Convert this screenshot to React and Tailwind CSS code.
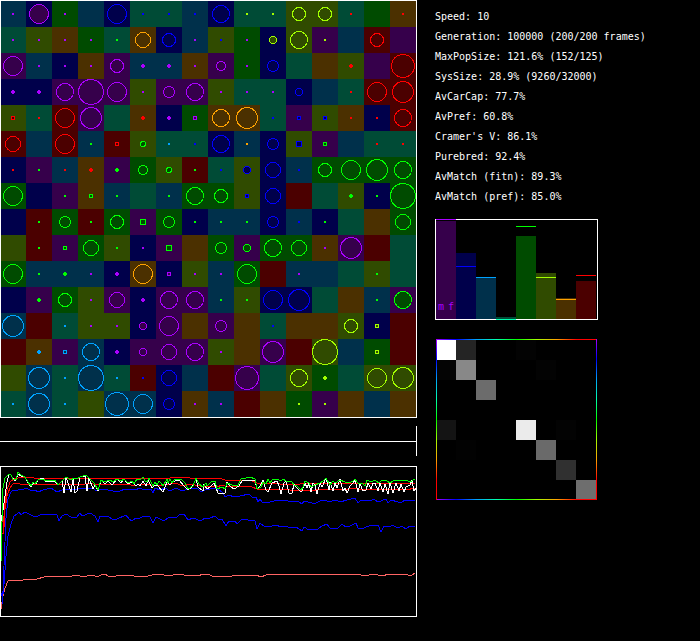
import React from "react";

// dark = habitat, bright = the species adapted to it
const HUES = {
  p: { dark: "#36004b", bright: "#aa00ff" },
  b: { dark: "#00004b", bright: "#0000ff" },
  c: { dark: "#00304b", bright: "#00a2ff" },
  t: { dark: "#004b36", bright: "#00ffb0" },
  g: { dark: "#004b00", bright: "#00ff00" },
  y: { dark: "#304b00", bright: "#a2ff00" },
  o: { dark: "#4b3000", bright: "#ffa200" },
  r: { dark: "#4b0000", bright: "#ff0000" },
};

const CELL = 26;

// habitat, species, size: a radius, "+" for a blob, "s" + half side for a square
const WORLD = [
  "c/p/1 b/p/10 g/p/1 c b/b/10 t/b/1 t/b/1 c/b/1 b/b/9 t/y/1 t/y/1 y/y/7 y/y/7 t/r/1 g o/r/1",
  "t/p/1 y/p/1 o/p/1 g/p/1 t/g/1 o/o/8 b/b/7 c/p/1 y/b/1 g/p/1 b/y/4 y/y/9 p/y/1 c r/r/7 p",
  "p/p/10 c/p/1 b/p/1 o/p/1 p/p/7 c/p/+ c/p/+ o/p/1 p/p/5 g/p/1 b/b/6 t o y/r/+ p r/r/12",
  "b/p/+ b/p/+ p/p/9 p/p/13 p/p/10 y/p/1 p/p/6 p/p/9 y/p/1 t/p/1 t/p/1 b/b/4 c t/r/1 r/r/10 r/r/11",
  "y/r/s2 t/r/1 r/r/10 p/p/11 t o/r/+ b/p/+ g/p/s2 o/o/9 o/o/11 t/b/1 p/b/s2 y/b/s2 o/r/1 b/r/1 r/r/9",
  "r/r/8 c r/r/10 c/g/1 r/r/s2 y/g/3 t/c/1 t/b/1 b/b/9 c/o/1 b/b/6 y/b/s3 p/g/s2 c t/r/1 t/r/1",
  "b/r/1 p/g/1 c/r/1 o/r/+ p/g/+ g/g/5 y/g/3 r/g/1 t/b/1 y/b/4 b/b/8 c/b/1 g/g/7 g/g/10 g/g/11 g/g/9",
  "g/g/10 b p/g/1 o/g/s2 c/g/1 t c/g/1 g/g/9 g/g/7 y/b/s2 b/b/8 r t y/g/+ b/g/1 g/g/13",
  "b r/g/1 g/g/6 r/g/1 g/g/7 p/g/s3 g/g/6 b/g/1 c/g/1 c/g/1 b/b/6 c/b/1 b/g/1 t o g/g/8",
  "y r/g/1 p/g/s2 g/g/8 y/g/1 b/p/1 p/g/s3 o g/g/6 p/g/4 g/g/9 g/g/8 o/p/1 p/p/11 r t",
  "g/g/10 c/g/1 c/g/+ c/p/1 b/p/+ o/o/10 b/p/s2 y/p/1 c/p/1 g/g/10 r c/p/1 c t y/g/1 t",
  "b p/g/+ g/g/7 y/p/1 p/p/8 b/p/+ p/p/9 p/p/9 c/g/1 y/g/1 b/b/10 b/b/11 t o c/g/1 p/g/9",
  "c/c/11 r t/c/1 y/p/1 y/p/1 b/p/4 p/p/10 o p/p/6 o t/b/1 o o y/y/7 b/y/s2 r",
  "r o/c/+ p/c/s2 c/c/9 b/p/+ p/p/4 p/p/8 p/p/9 y/p/1 o p/p/11 r y/y/13 c g/y/s2 r",
  "y c/c/11 t/c/1 c/c/13 t/c/1 r/b/1 b/b/8 c r p/p/12 t y/y/9 g/y/+ t y/y/10 y/y/11",
  "t/c/1 c/c/11 t/c/1 y c/c/12 c/c/10 b/b/6 o/p/1 c/p/1 r o g/y/1 p/y/1 o c o",
].map((row) => row.split(" ").map((cell) => cell.split("/")));

const STATS = [
  ["Speed", "10"],
  ["Generation", "100000 (200/200 frames)"],
  ["MaxPopSize", "121.6% (152/125)"],
  ["SysSize", "28.9% (9260/32000)"],
  ["AvCarCap", "77.7%"],
  ["AvPref", "60.8%"],
  ["Cramer's V", "86.1%"],
  ["Purebred", "92.4%"],
  ["AvMatch (fitn)", "89.3%"],
  ["AvMatch (pref)", "85.0%"],
];

// top = bar top, mark = marker line
const BARS = [
  { hue: "p", top: 2, mark: 0 },
  { hue: "b", top: 34, mark: 47 },
  { hue: "c", top: 58, mark: 58 },
  { hue: "t", top: 98, mark: 100 },
  { hue: "g", top: 17, mark: 7 },
  { hue: "y", top: 54, mark: 58 },
  { hue: "o", top: 79, mark: 80 },
  { hue: "r", top: 62, mark: 56 },
];

const MATCHES = [
  [0, 0, "#ffffff"],
  [0, 1, "#242424"],
  [0, 4, "#030303"],
  [1, 0, "#040404"],
  [1, 1, "#888888"],
  [1, 5, "#030303"],
  [2, 2, "#6c6c6c"],
  [4, 0, "#141414"],
  [4, 4, "#ebebeb"],
  [4, 6, "#030303"],
  [5, 1, "#020202"],
  [5, 5, "#6a6a6a"],
  [6, 6, "#303030"],
  [7, 7, "#6e6e6e"],
];

const SERIES = [
  {
    color: "#ff6464",
    points:
      "1,143 3,130 5,122 8,115 18,114 20,115 23,114 37,113 44,111 52,110 60,111 66,110 72,110 74,109 76,110 79,109 81,111 87,110 93,109 97,111 101,109 105,108 108,110 116,110 118,109 124,110 132,109 134,110 148,110 152,109 154,108 157,109 161,108 167,110 180,108 184,109 196,109 199,110 202,108 208,108 212,110 232,110 242,109 256,109 261,111 266,109 270,108 274,109 284,108 298,109 305,108 312,109 322,108 332,109 346,108 348,109 355,108 361,109 366,110 372,108 384,110 387,108 395,109 404,108 408,109 412,109 415,107",
  },
  {
    color: "#0000ff",
    points:
      "1,130 3,125 4,100 6,52 8,33 11,26 13,24 16,25 20,23 22,24 26,22 30,24 35,24 38,26 43,24 51,22 57,26 62,24 66,23 74,24 80,22 85,23 93,22 96,25 102,23 108,24 113,25 120,25 125,23 135,24 140,22 144,24 151,23 153,27 155,22 160,24 165,22 170,25 176,22 182,25 188,23 197,22 201,26 205,24 215,22 219,24 222,26 225,31 229,29 234,31 240,30 249,28 252,31 256,31 258,36 260,33 262,36 270,36 278,34 284,34 292,36 298,35 302,38 304,35 312,37 316,37 320,35 326,34 328,36 336,34 340,36 347,34 355,32 358,37 361,34 370,35 374,33 378,36 386,33 388,37 391,34 398,36 401,37 405,34 410,35 415,34",
  },
  {
    color: "#0000ff",
    points:
      "2,138 4,118 6,90 8,70 11,58 14,50 17,48 19,46 21,49 25,46 29,48 33,50 38,50 42,48 48,49 52,48 57,49 59,55 62,50 66,48 71,51 77,51 80,47 82,50 90,47 95,50 98,56 100,50 108,50 112,53 117,53 126,49 129,53 132,55 136,52 140,52 144,50 150,51 153,57 156,51 160,53 164,55 168,52 177,51 180,48 184,48 188,54 193,52 201,55 205,52 210,52 215,50 219,54 222,53 226,60 229,55 235,55 237,58 242,53 248,54 255,55 257,63 260,57 265,61 272,60 276,59 281,61 286,60 290,62 296,61 302,65 304,61 309,64 318,63 322,60 327,58 330,62 338,62 342,58 346,61 350,60 356,57 358,62 364,62 371,59 378,59 381,66 384,60 390,61 392,59 398,62 402,60 406,63 410,60 415,61",
  },
  {
    color: "#ff0000",
    points:
      "1,80 2,50 4,62 5,36 7,24 10,16 14,13 18,12 32,11 36,13 45,12 58,13 64,12 96,12 101,13 116,12 122,13 128,12 160,12 165,13 175,11 184,11 190,12 200,12 206,13 208,12 219,12 225,14 240,15 248,14 252,15 257,17 272,17 280,18 300,18 304,17 312,18 340,17 346,18 362,17 368,18 396,17 400,18 406,17 415,18",
  },
  {
    color: "#ff0000",
    points:
      "1,66 3,68 4,50 7,30 10,22 13,18 18,17 20,18 32,18 36,19 43,18 56,19 62,18 76,18 80,19 90,17 96,19 112,18 116,19 128,18 134,20 140,18 150,19 164,19 176,17 182,20 190,18 200,20 210,20 217,21 222,19 228,21 240,20 252,21 257,23 270,24 278,23 290,24 310,25 322,23 335,24 348,23 354,22 364,24 372,23 380,24 394,23 406,24 415,22",
  },
  {
    color: "#ffffff",
    points:
      "1,55 3,44 5,30 7,16 9,8 11,9 14,14 16,14 18,8 21,10 25,11 28,17 31,21 33,17 36,18 38,14 43,12 46,16 55,15 58,19 62,15 64,27 66,11 71,26 73,13 75,27 77,25 80,11 85,10 87,25 89,12 93,23 95,19 98,25 101,14 105,18 108,15 112,19 117,13 121,17 124,13 128,18 132,16 136,20 138,18 140,20 143,15 146,20 148,14 152,22 155,19 158,20 163,26 167,16 170,19 173,16 177,14 180,15 183,19 188,24 192,21 196,13 198,21 203,25 204,18 207,23 210,21 214,17 218,27 225,27 227,16 231,21 234,23 239,20 242,15 248,14 255,14 257,23 260,20 263,14 266,24 268,26 272,17 277,15 279,20 281,28 284,17 286,15 289,27 292,27 294,18 297,22 300,25 302,25 305,17 307,22 309,17 311,26 313,17 315,19 317,28 320,17 322,21 326,12 329,24 330,16 333,25 335,17 337,22 340,13 343,25 345,22 347,27 350,20 353,17 355,14 358,26 360,18 363,25 366,24 368,17 371,23 373,17 375,17 378,25 380,17 383,26 385,18 388,28 390,17 393,27 396,17 399,25 401,18 404,26 406,21 410,19 412,14 414,25 416,22",
  },
  {
    color: "#00ff00",
    points:
      "1,96 2,55 3,22 5,12 9,8 11,9 13,13 16,14 18,6 21,9 25,11 28,16 31,20 33,16 35,18 38,14 43,13 46,15 55,14 58,19 62,15 66,11 71,14 74,12 76,13 80,11 86,9 90,13 94,17 98,24 101,14 104,16 110,14 113,16 117,13 121,15 124,13 128,17 132,15 134,18 137,13 140,14 143,11 145,15 147,16 149,12 153,20 155,16 157,19 159,15 161,17 163,20 167,13 168,17 170,13 172,17 175,13 178,14 181,13 185,17 188,23 193,20 196,12 199,18 203,21 206,17 207,20 212,15 215,15 217,23 222,21 225,23 227,17 232,19 235,20 238,19 241,13 246,12 250,11 255,13 257,23 261,21 263,16 266,18 268,13 270,17 273,13 277,13 281,15 283,13 286,15 292,16 294,19 297,20 301,24 303,21 305,15 309,17 311,21 315,19 320,17 323,15 326,12 330,19 333,15 335,17 340,14 345,16 349,17 353,15 355,13 358,17 362,17 365,20 367,14 371,16 375,14 379,17 381,15 386,14 390,17 393,15 402,14 406,14 410,16 415,13",
  },
];

function Marker({ cx, cy, hue, size }) {
  const { dark, bright } = HUES[hue];

  if (size === "1") {
    return <rect x={cx - 1} y={cy - 1} width="2" height="2" fill={bright} />;
  }
  if (size === "+") {
    return (
      <g fill={bright}>
        <rect x={cx - 2} y={cy - 1} width="4" height="2" />
        <rect x={cx - 1} y={cy - 2} width="2" height="4" />
      </g>
    );
  }
  if (size[0] === "s") {
    const half = Number(size[1]) - 0.5;
    return (
      <rect
        x={cx - half}
        y={cy - half}
        width={half * 2}
        height={half * 2}
        fill={dark}
        stroke={bright}
      />
    );
  }
  return (
    <circle cx={cx} cy={cy} r={Number(size) - 0.5} fill={dark} stroke={bright} />
  );
}

function World() {
  return (
    <svg
      viewBox="0 0 417 418"
      className="block w-full"
      shapeRendering="crispEdges"
      role="img"
      aria-label="World map"
    >
      {WORLD.map((row, j) =>
        row.map(([habitat], i) => (
          <rect
            key={`${i}-${j}`}
            x={i * CELL}
            y={j * CELL + 1}
            width={CELL}
            height={CELL}
            fill={HUES[habitat].dark}
          />
        ))
      )}
      <rect x="0.5" y="0.5" width="416" height="417" fill="none" stroke="#fff" />
      {WORLD.map((row, j) =>
        row.map(
          ([, hue, size], i) =>
            hue && (
              <Marker
                key={`${i}-${j}`}
                cx={i * CELL + 13}
                cy={j * CELL + 14}
                hue={hue}
                size={size}
              />
            )
        )
      )}
    </svg>
  );
}

function History() {
  return (
    <svg
      viewBox="0 0 417 151"
      className="block w-full mt-[10px]"
      shapeRendering="crispEdges"
      role="img"
      aria-label="History"
    >
      {SERIES.map((s, i) => (
        <polyline key={i} points={s.points} fill="none" stroke={s.color} />
      ))}
      <rect x="0.5" y="0.5" width="416" height="150" fill="none" stroke="#fff" />
    </svg>
  );
}

function Stats() {
  return (
    <dl className="pt-[7px] text-[10px] leading-[20px] whitespace-nowrap">
      {STATS.map(([label, value]) => (
        <div key={label}>
          <dt className="inline">{label}: </dt>
          <dd className="inline">{value}</dd>
        </div>
      ))}
    </dl>
  );
}

function Population() {
  return (
    <svg
      viewBox="0 0 163 101"
      className="block w-full mt-3"
      shapeRendering="crispEdges"
      role="img"
      aria-label="Population by species"
    >
      <rect x="0.5" y="0.5" width="162" height="100" fill="none" stroke="#fff" />
      {BARS.map((bar, i) => (
        <g key={bar.hue}>
          <rect
            x={i * 20 + 1}
            y={bar.top}
            width="20"
            height={100 - bar.top}
            fill={HUES[bar.hue].dark}
          />
          <rect
            x={i * 20 + 1}
            y={bar.mark}
            width="20"
            height="1"
            fill={HUES[bar.hue].bright}
          />
        </g>
      ))}
      <g fill={HUES.p.bright} fontSize="10" textAnchor="middle">
        <text x="6" y="91">m</text>
        <text x="16" y="91">f</text>
      </g>
    </svg>
  );
}

function MatchMatrix() {
  const stops = Object.values(HUES).map((hue, i) => (
    <stop key={hue.bright} offset={i / 8} stopColor={hue.bright} />
  ));

  return (
    <svg
      viewBox="0 0 163 161"
      className="block w-full mt-[19px]"
      shapeRendering="crispEdges"
      role="img"
      aria-label="Match matrix"
    >
      <defs>
        <linearGradient id="across">{stops}</linearGradient>
        <linearGradient id="down" x2="0" y2="1">
          {stops}
        </linearGradient>
      </defs>
      {MATCHES.map(([row, col, fill]) => (
        <rect
          key={`${row}-${col}`}
          x={col * 20 + 1}
          y={row * 20 + 1}
          width="20"
          height="20"
          fill={fill}
        />
      ))}
      <rect x="1" y="0" width="161" height="1" fill="url(#across)" />
      <rect x="1" y="160" width="161" height="1" fill="url(#across)" />
      <rect x="1" y="0" width="1" height="161" fill="url(#down)" />
      <rect x="161" y="0" width="1" height="161" fill="url(#down)" />
    </svg>
  );
}

export default function App() {
  return (
    <main className="min-h-screen bg-black text-white font-['DejaVu_Sans_Mono',monospace] grid grid-cols-[417fr_283fr] items-start">
      <section className="min-w-0">
        <World />
        <div className="mt-2 h-[30px] border-r border-white">
          <div className="h-4 border-b border-white" />
        </div>
        <History />
      </section>
      <aside className="min-w-0 pl-[18px]">
        <Stats />
        <div className="w-8/13 min-w-[163px] max-w-[163px]">
          <Population />
          <MatchMatrix />
        </div>
      </aside>
    </main>
  );
}
